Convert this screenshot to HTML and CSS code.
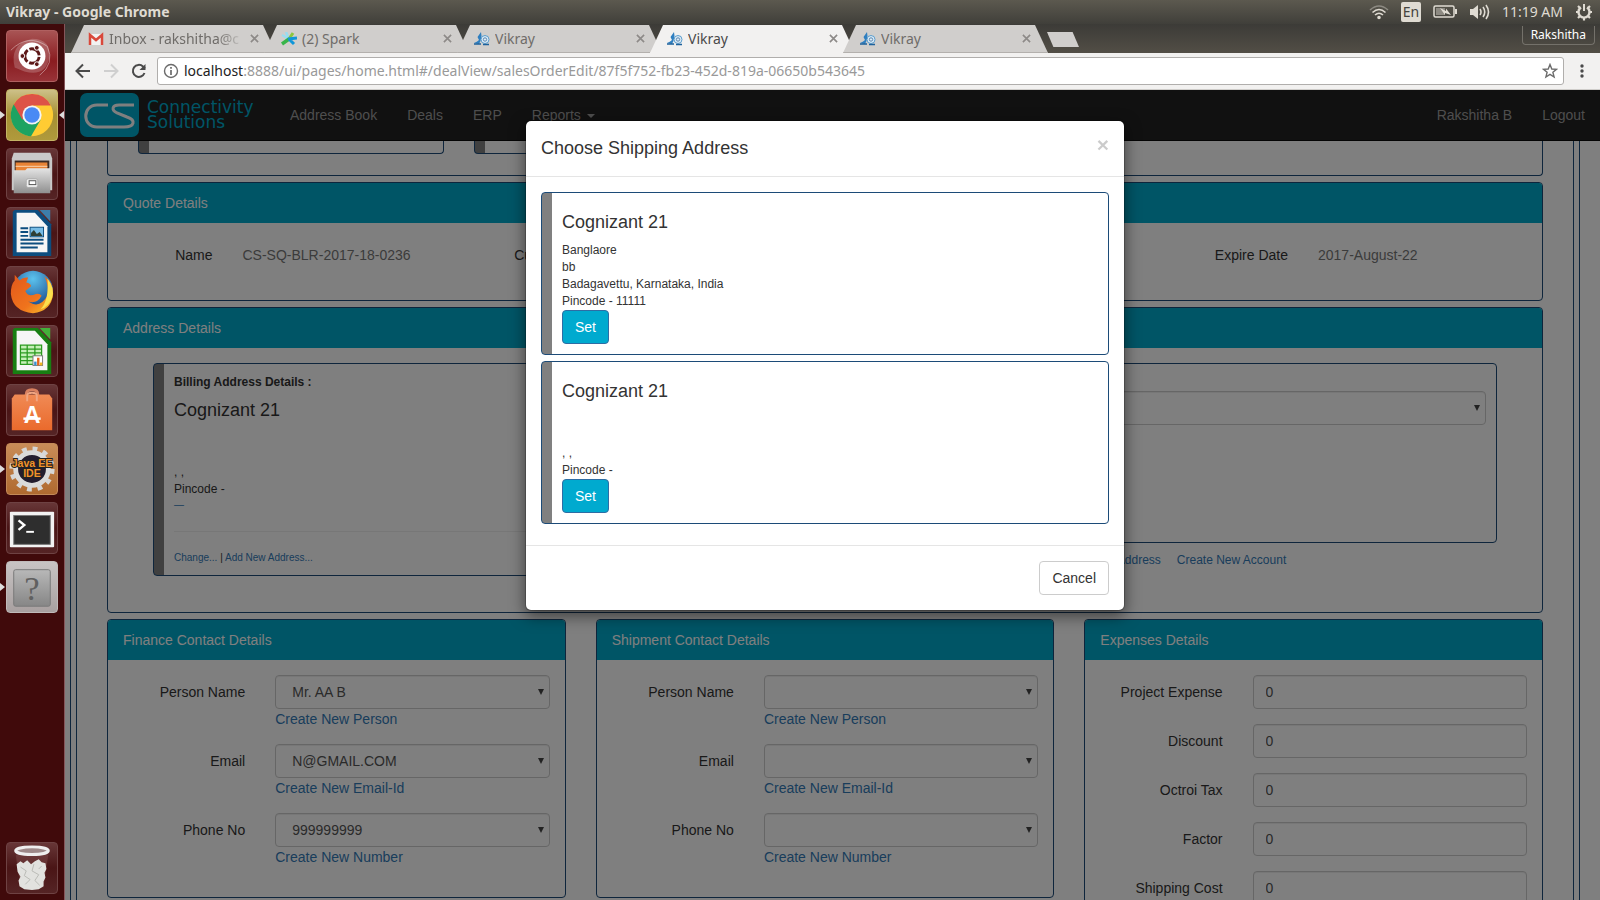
FILE: index.html
```html
<!DOCTYPE html>
<html lang="en">
<head>
  <meta charset="UTF-8">
  <meta name="viewport" content="width=device-width, initial-scale=1.0">
  <title>Vikray</title>
  <link rel="stylesheet" href="styles.css">
</head>
<body>
  <!-- Shared icons -->
  <svg class="defs" width="0" height="0" aria-hidden="true">
    <defs>
      <symbol id="vikray" viewBox="0 0 16 14">
        <path d="M0 11 Q3 10 5 8 L3.500 5 L7 0 L7.500 4 L6.500 9 L5 12 Z" fill="#2f7fc0"/>
        <circle cx="11" cy="7.500" r="4" fill="#dcebf6" stroke="#5a9ccc" stroke-width="1"/>
        <circle cx="11" cy="7.500" r="1.700" fill="none" stroke="#5a86b0"/>
        <path d="M0 12 H7 M9 12.500 H15" stroke="#1d629c" stroke-width="1.500"/>
      </symbol>
      <symbol id="cross" viewBox="0 0 10 10">
        <path d="M1 1 L9 9 M9 1 L1 9" fill="none" stroke="currentColor" stroke-width="1.800"/>
      </symbol>
      <linearGradient id="metal" x1="0" y1="0" x2="0" y2="1">
        <stop offset="0" stop-color="#e4e4e4"/><stop offset="1" stop-color="#8f8f8f"/>
      </linearGradient>
      <linearGradient id="slate" x1="0" y1="0" x2="0" y2="1">
        <stop offset="0" stop-color="#b8b8b8"/><stop offset="1" stop-color="#868686"/>
      </linearGradient>
      <linearGradient id="orange" x1="0" y1="0" x2="0" y2="1">
        <stop offset="0" stop-color="#f08a55"/><stop offset="1" stop-color="#ea6a2c"/>
      </linearGradient>
      <radialGradient id="globe" cx="0.5" cy="0.2" r="0.8">
        <stop offset="0" stop-color="#5cc3ee"/><stop offset="1" stop-color="#123a80"/>
      </radialGradient>
      <linearGradient id="fox" x1="0" y1="0" x2="1" y2="1">
        <stop offset="0" stop-color="#e2571c"/><stop offset="0.6" stop-color="#f0741c"/><stop offset="1" stop-color="#f8c92c"/>
      </linearGradient>
    </defs>
  </svg>

  <header class="panel-bar">
    <span class="window-title">Vikray - Google Chrome</span>
    <div class="tray">
      <svg width="20" height="16" viewBox="0 0 20 16" fill="none" stroke="#dfdbd2" stroke-width="1.600">
        <path d="M1 6 Q10 -2 19 6" stroke="#8d8a82"/>
        <path d="M3.500 8.500 Q10 2.500 16.500 8.500"/>
        <path d="M6 11 Q10 7.500 14 11"/>
        <circle cx="10" cy="13.500" r="1" fill="#dfdbd2"/>
      </svg>
      <span class="lang">En</span>
      <svg width="24" height="14" viewBox="0 0 24 14">
        <rect x="1" y="1" width="20" height="11" rx="1.500" fill="none" stroke="#dfdbd2" stroke-width="1.500"/>
        <rect x="22" y="4" width="2" height="5" fill="#dfdbd2"/>
        <rect x="3" y="3" width="9" height="7" fill="#8d8a82"/>
        <path d="M7 3 L13 6 L13 3.500 L18 10 L12 8 L12 10 Z" fill="#dfdbd2"/>
      </svg>
      <svg width="21" height="18" viewBox="0 0 21 18">
        <path d="M1 6 H4 L9 2 V16 L4 12 H1 Z" fill="#dfdbd2"/>
        <path d="M11 6 Q13 9 11 12 M14 4 Q17.500 9 14 14 M17 2 Q22 9 17 16" fill="none" stroke="#dfdbd2" stroke-width="1.600"/>
      </svg>
      <span class="clock">11:19 AM</span>
      <svg width="18" height="18" viewBox="0 0 18 18" fill="none" stroke="#dfdbd2">
        <path d="M6 4.500 A5.500 5.500 0 1 0 12 4.500" stroke-width="2.400"/>
        <path d="M9 1 V8" stroke-width="2"/>
        <path d="M1 9 H3 M15 9 H17 M3 3 L5 5 M15 3 L13 5 M3 15 L5 13 M15 15 L13 13 M9 15 V17.500" stroke-width="2.200"/>
      </svg>
    </div>
  </header>

  <nav class="launcher">
    <button class="tile tile-dash" aria-label="Search your computer">
      <svg viewBox="0 0 52 52">
        <path d="M8 38 Q2 14 26 8 Q46 8 44 28 Q40 48 18 42" fill="#fff" opacity="0.2"/>
        <path d="M4 20 Q22 2 42 16 Q50 34 34 46" fill="none" stroke="#fff" opacity="0.4"/>
        <circle cx="26" cy="26" r="14" fill="#fff"/>
        <circle cx="26" cy="26" r="7.500" fill="none" stroke="#5c1717" stroke-width="3" stroke-dasharray="13.700 2" stroke-dashoffset="-1"/>
        <circle cx="16" cy="26" r="2.500" fill="#5c1717" stroke="#fff"/>
        <circle cx="31" cy="17.500" r="2.500" fill="#5c1717" stroke="#fff"/>
        <circle cx="31" cy="34.500" r="2.500" fill="#5c1717" stroke="#fff"/>
      </svg>
    </button>
    <button class="tile tile-chrome running focused" aria-label="Google Chrome">
      <svg viewBox="0 0 52 52">
        <circle cx="26" cy="26" r="22" fill="#fc3"/>
        <path d="M26 26 L6.900 15 A22 22 0 0 0 25 48 L35 31 Z" fill="#1da362"/>
        <path d="M7 15 A22 22 0 0 1 45.500 16 H26 L16 31 Z" fill="#dd5347"/>
        <circle cx="26" cy="26" r="10" fill="#f4f4f4"/>
        <circle cx="26" cy="26" r="8" fill="#4a8af4"/>
      </svg>
    </button>
    <button class="tile" aria-label="Files">
      <svg viewBox="0 0 52 52">
        <path d="M7 4 H45 L47 10 V43 H5 V10 Z" fill="#c9c9c9"/>
        <rect x="8" y="12" width="36" height="12" fill="#3a2b25"/>
        <rect x="9" y="14" width="33" height="9" fill="#e88335"/>
        <path d="M9 18 H42" stroke="#fbd9b5"/>
        <path d="M7 22 H19 L21 20 H45 V46 H7 Z" fill="url(#metal)"/>
        <rect x="20" y="31" width="12" height="9" rx="2" fill="#eee" stroke="#aaa"/>
        <rect x="23" y="33" width="7" height="4" fill="#fff" stroke="#555"/>
      </svg>
    </button>
    <button class="tile" aria-label="LibreOffice Writer">
      <svg viewBox="0 0 52 52">
        <path d="M8 2 H32 L46 17 V50 H6 V4 Z" fill="#0c4d7f"/>
        <path d="M34 2 H45 V14 Z" fill="#3d7eab"/>
        <path d="M10 5 H29 L42 19 V46 H10 Z" fill="#f6f6f6"/>
        <path d="M14 21 H22 M14 25 H22 M14 29 H22 M14 33 H38 M14 37 H38 M14 41 H32" stroke="#0c4d7f" stroke-width="2"/>
        <rect x="24" y="20" width="14" height="10" fill="#78bce5" stroke="#0c4d7f"/>
        <path d="M25 29 V26 L28 23 L31 27 L34 25 L37 29 Z" fill="#2f3f35"/>
      </svg>
    </button>
    <button class="tile" aria-label="Firefox">
      <svg viewBox="0 0 52 52">
        <circle cx="27" cy="25" r="21" fill="url(#globe)"/>
        <path d="M8 8 L13 14 Q17 10 22 11 L20 16 Q25 17 25 20 L19 25 Q22 32 30 28 Q34 27 36 30 Q31 39 22 36 Q34 44 42 30 Q44 20 39 10 Q48 16 48 28 Q46 46 27 48 Q6 46 4 28 Q4 18 8 14 Z" fill="url(#fox)"/>
        <path d="M42 12 Q50 22 47 32 Q43 42 35 44 Q44 34 42 12" fill="#fbe04e"/>
      </svg>
    </button>
    <button class="tile" aria-label="LibreOffice Calc">
      <svg viewBox="0 0 52 52">
        <path d="M8 2 H32 L46 17 V50 H6 V4 Z" fill="#187f12"/>
        <path d="M34 2 H45 V14 Z" fill="#43b03a"/>
        <path d="M10 5 H29 L42 19 V46 H10 Z" fill="#f6f6f6"/>
        <rect x="14" y="20" width="22" height="20" fill="#c6f0b8"/>
        <path d="M14 20 H36 V40 H14 Z M14 24 H36 M14 28 H36 M14 32 H36 M14 36 H36 M21 20 V40 M29 20 V40" fill="none" stroke="#2a9a1e" stroke-width="1.300"/>
        <rect x="27" y="31" width="10" height="10" fill="#fff" stroke="#777"/>
        <path d="M29.500 41 V37" stroke="#3b8fd0" stroke-width="2.500"/>
        <path d="M32.500 41 V33" stroke="#e3651d" stroke-width="2.500"/>
        <path d="M35.500 41 V38" stroke="#f0b61e" stroke-width="2.500"/>
      </svg>
    </button>
    <button class="tile" aria-label="Ubuntu Software">
      <svg viewBox="0 0 52 52">
        <path d="M20 18 V10 Q20 5 26 5 Q32 5 32 10 V18" fill="none" stroke="#d98160" stroke-width="3"/>
        <path d="M5 14 L8 10 H44 L47 14 V47 H5 Z" fill="url(#orange)"/>
        <path d="M21 17 V11 Q21 8 26 8 Q31 8 31 11 V17" fill="none" stroke="#f0a582" stroke-width="2"/>
        <text x="26" y="39" text-anchor="middle" class="bag-letter">A</text>
        <path d="M17 35 H35" stroke="#fff" stroke-width="2.500"/>
      </svg>
    </button>
    <button class="tile tile-java running" aria-label="Java EE IDE">
      <svg viewBox="0 0 52 52">
        <circle cx="26" cy="26" r="21" fill="none" stroke="#d6d6d6" stroke-width="5" stroke-dasharray="5 5.990"/>
        <circle cx="26" cy="26" r="17" fill="#231d2e" stroke="#dadada" stroke-width="5"/>
        <text x="26" y="24" text-anchor="middle" class="java-text">Java EE</text>
        <text x="26" y="34" text-anchor="middle" class="java-text">IDE</text>
      </svg>
    </button>
    <button class="tile" aria-label="Terminal">
      <svg viewBox="0 0 52 52">
        <rect x="3" y="9" width="46" height="37" rx="1" fill="#f2f2f2"/>
        <rect x="7" y="13" width="38" height="30" fill="#2e2e2e" stroke="#777"/>
        <path d="M12 18 L18 23 L12 28" fill="none" stroke="#fff" stroke-width="2.500"/>
        <path d="M20 30 H28" stroke="#fff" stroke-width="2"/>
      </svg>
    </button>
    <button class="tile tile-unknown running" aria-label="Unknown application">
      <svg viewBox="0 0 52 52">
        <rect x="7" y="8" width="38" height="38" rx="2" fill="url(#slate)" stroke="#787878"/>
        <text x="26" y="39" text-anchor="middle" class="question">?</text>
      </svg>
    </button>
    <button class="tile tile-trash" aria-label="Trash">
      <svg viewBox="0 0 52 52">
        <path d="M9 12 L14 46 Q26 50 38 46 L43 12 Z" fill="#7c4a4a" opacity="0.5"/>
        <path d="M10 22 L14 19 L17 21 L21 18 L25 22 L29 19 L33 17 L36 20 L40 21 L41 27 L39 31 L40 36 L38 40 L38 45 L33 48 L26 49 L18 48 L13 45 L12 39 L14 35 L11 30 Z" fill="#e2e2df"/>
        <path d="M14 25 L20 29 L18 34 L24 38 L19 43 M28 22 L26 29 L33 33 L29 39 L34 44 M36 24 L33 27" fill="none" stroke="#b9bab5"/>
        <ellipse cx="26" cy="8" rx="17" ry="4" fill="#9d8888" stroke="#eee" stroke-width="3"/>
      </svg>
    </button>
  </nav>

  <div class="browser">
    <div class="tab-strip">
      <div class="tab">
        <svg class="favicon" viewBox="0 0 16 14">
          <rect x="1" y="2" width="14" height="11" fill="#f2f2f2"/>
          <path d="M2 13 V3 L8 8 L14 3 V13" fill="none" stroke="#d9483b" stroke-width="2.500"/>
        </svg>
        <span class="tab-title faded">Inbox - rakshitha@c</span>
        <svg class="tab-close"><use href="#cross"/></svg>
      </div>
      <div class="tab">
        <svg class="favicon" viewBox="0 0 16 14" fill="none">
          <path d="M5 0 L8 7 M1 3 L8 7" stroke="#9adcf0" stroke-width="2.500"/>
          <path d="M12 1 L8 7" stroke="#8cc63f" stroke-width="3"/>
          <path d="M1 12 L8 7" stroke="#38b54a" stroke-width="3.500"/>
          <path d="M7 7 L16 6 M8 7 L13 12" stroke="#1096d8" stroke-width="3"/>
        </svg>
        <span class="tab-title">(2) Spark</span>
        <svg class="tab-close"><use href="#cross"/></svg>
      </div>
      <div class="tab">
        <svg class="favicon"><use href="#vikray"/></svg>
        <span class="tab-title">Vikray</span>
        <svg class="tab-close"><use href="#cross"/></svg>
      </div>
      <div class="tab active">
        <svg class="favicon"><use href="#vikray"/></svg>
        <span class="tab-title">Vikray</span>
        <svg class="tab-close"><use href="#cross"/></svg>
      </div>
      <div class="tab">
        <svg class="favicon"><use href="#vikray"/></svg>
        <span class="tab-title">Vikray</span>
        <svg class="tab-close"><use href="#cross"/></svg>
      </div>
      <button class="new-tab" aria-label="New tab"></button>
      <span class="profile">Rakshitha</span>
    </div>

    <div class="toolbar">
      <svg width="16" height="16" viewBox="0 0 16 16" fill="none" stroke="#4a4a4a" stroke-width="2"><path d="M15 8 H2 M8 1.500 L1.500 8 L8 14.500"/></svg>
      <svg width="16" height="16" viewBox="0 0 16 16" fill="none" stroke="#cfcfcf" stroke-width="2"><path d="M1 8 H14 M8 1.500 L14.500 8 L8 14.500"/></svg>
      <svg width="16" height="16" viewBox="0 0 16 16" fill="none" stroke="#4a4a4a" stroke-width="2"><path d="M13.500 10 A6 6 0 1 1 12 3.500 L14 5.500"/><path d="M14.500 1 V7 H8.500 Z" fill="#4a4a4a" stroke="none"/></svg>
      <div class="url-box">
        <svg width="16" height="16" viewBox="0 0 16 16" fill="none" stroke="#6b6b6b"><circle cx="8" cy="8" r="6.500" stroke-width="1.400"/><path d="M8 7 V12 M8 4 V5.700" stroke-width="1.700"/></svg>
        <span class="url"><b>localhost</b>:8888/ui/pages/home.html#/dealView/salesOrderEdit/87f5f752-fb23-452d-819a-06650b543645</span>
        <svg width="16" height="16" viewBox="0 0 16 16" fill="none" stroke="#6b6b6b" stroke-width="1.400"><path d="M8 1.500 L9.800 6 L14.500 6.300 L10.900 9.300 L12.100 14 L8 11.400 L3.900 14 L5.100 9.300 L1.500 6.300 L6.200 6 Z"/></svg>
      </div>
      <svg width="4" height="16" viewBox="0 0 4 16" fill="#4a4a4a"><circle cx="2" cy="3" r="1.700"/><circle cx="2" cy="8" r="1.700"/><circle cx="2" cy="13" r="1.700"/></svg>
    </div>

    <div class="page">
      <nav class="navbar">
        <a class="brand" href="#">
          <svg width="59" height="44" viewBox="0 0 59 44">
            <rect width="59" height="44" rx="7" fill="#00aacc"/>
            <path d="M28 12 H17 C2 12 2 34 17 34 H44 C55 34 56 27 47 24 L37 20 C31 17 32 12 39 12 H54" fill="none" stroke="#fff" stroke-width="3"/>
          </svg>
          <span class="brand-text">Connectivity<br>Solutions</span>
        </a>
        <a class="nav-link" href="#">Address Book</a>
        <a class="nav-link" href="#">Deals</a>
        <a class="nav-link" href="#">ERP</a>
        <a class="nav-link" href="#">Reports <span class="caret"></span></a>
        <a class="nav-link first-right" href="#">Rakshitha B</a>
        <a class="nav-link" href="#">Logout</a>
      </nav>

      <div class="frame">
        <main class="frame-inner">
          <section class="panel panel-top">
            <div class="card-stub"></div>
            <div class="card-stub"></div>
            <div class="card-stub"></div>
          </section>

          <section class="panel">
            <h3 class="panel-heading">Quote Details</h3>
            <div class="quote-row">
              <div class="field"><span class="label">Name</span><span class="value">CS-SQ-BLR-2017-18-0236</span></div>
              <div class="field"><span class="label">Currency</span><span class="value"></span></div>
              <div class="field"></div>
              <div class="field"><span class="label">Expire Date</span><span class="value">2017-August-22</span></div>
            </div>
          </section>

          <section class="panel">
            <h3 class="panel-heading">Address Details</h3>
            <div class="address-row">
              <div class="address-card">
                <strong>Billing Address Details :</strong>
                <h4>Cognizant 21</h4>
                <p><br><br>, ,<br>Pincode -</p>
                <div class="small"><a href="#">—</a></div>
                <hr>
                <div class="small"><a href="#">Change...</a> | <a href="#">Add New Address...</a></div>
              </div>
              <div>
                <div class="address-card shipping">
                  <label for="ship-account"><strong>Shipping Address Details :</strong></label>
                  <div class="select"><select id="ship-account"><option></option></select></div>
                </div>
                <div class="address-links">
                  <a href="#">Create New Address</a>
                  <a href="#">Create New Account</a>
                </div>
              </div>
            </div>
          </section>

          <div class="columns">
            <section class="panel">
              <h3 class="panel-heading">Finance Contact Details</h3>
              <div class="panel-body">
                <div class="field">
                  <label class="label" for="fin-person">Person Name</label>
                  <div class="control">
                    <div class="select"><select id="fin-person"><option>Mr. AA B</option></select></div>
                    <a href="#">Create New Person</a>
                  </div>
                </div>
                <div class="field">
                  <label class="label" for="fin-email">Email</label>
                  <div class="control">
                    <div class="select"><select id="fin-email"><option>N@GMAIL.COM</option></select></div>
                    <a href="#">Create New Email-Id</a>
                  </div>
                </div>
                <div class="field">
                  <label class="label" for="fin-phone">Phone No</label>
                  <div class="control">
                    <div class="select"><select id="fin-phone"><option>999999999</option></select></div>
                    <a href="#">Create New Number</a>
                  </div>
                </div>
              </div>
            </section>

            <section class="panel">
              <h3 class="panel-heading">Shipment Contact Details</h3>
              <div class="panel-body">
                <div class="field">
                  <label class="label" for="shp-person">Person Name</label>
                  <div class="control">
                    <div class="select"><select id="shp-person"><option></option></select></div>
                    <a href="#">Create New Person</a>
                  </div>
                </div>
                <div class="field">
                  <label class="label" for="shp-email">Email</label>
                  <div class="control">
                    <div class="select"><select id="shp-email"><option></option></select></div>
                    <a href="#">Create New Email-Id</a>
                  </div>
                </div>
                <div class="field">
                  <label class="label" for="shp-phone">Phone No</label>
                  <div class="control">
                    <div class="select"><select id="shp-phone"><option></option></select></div>
                    <a href="#">Create New Number</a>
                  </div>
                </div>
              </div>
            </section>

            <section class="panel">
              <h3 class="panel-heading">Expenses Details</h3>
              <div class="panel-body">
                <div class="field"><label class="label" for="expense">Project Expense</label><div class="control"><input id="expense" type="text" value="0"></div></div>
                <div class="field"><label class="label" for="discount">Discount</label><div class="control"><input id="discount" type="text" value="0"></div></div>
                <div class="field"><label class="label" for="octroi">Octroi Tax</label><div class="control"><input id="octroi" type="text" value="0"></div></div>
                <div class="field"><label class="label" for="factor">Factor</label><div class="control"><input id="factor" type="text" value="0"></div></div>
                <div class="field"><label class="label" for="shipcost">Shipping Cost</label><div class="control"><input id="shipcost" type="text" value="0"></div></div>
              </div>
            </section>
          </div>
        </main>
      </div>

      <div class="backdrop">
        <div class="modal" role="dialog" aria-labelledby="modal-title">
          <div class="modal-header">
            <h4 id="modal-title">Choose Shipping Address</h4>
            <button class="close" aria-label="Close">×</button>
          </div>
          <div class="modal-body">
            <div class="address-card">
              <h4>Cognizant 21</h4>
              <p>Banglaore<br>bb<br>Badagavettu, Karnataka, India<br>Pincode - 11111</p>
              <button class="btn btn-primary">Set</button>
            </div>
            <div class="address-card">
              <h4>Cognizant 21</h4>
              <p><br><br>, ,<br>Pincode -</p>
              <button class="btn btn-primary">Set</button>
            </div>
          </div>
          <div class="modal-footer">
            <button class="btn">Cancel</button>
          </div>
        </div>
      </div>
    </div>
  </div>
</body>
</html>
```

FILE: styles.css
```css
* {
  box-sizing: border-box;
}

body {
  margin: 0;
  height: 100vh;
  overflow: hidden;
  display: grid;
  grid-template-rows: 24px minmax(0, 1fr);
  grid-template-columns: 65px minmax(0, 1fr);
  font-family: "Liberation Sans", Arial, sans-serif;
  font-size: 14px;
  line-height: 20px;
  color: #333;
}

button {
  font-family: inherit;
  cursor: pointer;
}

a {
  color: #337ab7;
  text-decoration: none;
}

.defs {
  position: absolute;
}

/* Desktop panel */
.panel-bar {
  grid-column: 1 / 3;
  display: flex;
  justify-content: space-between;
  align-items: center;
  padding: 0 7px 0 6px;
  background: linear-gradient(#5c594f, #403f3a);
  color: #dfdbd2;
  font-family: "Noto Sans", sans-serif;
}

.window-title {
  font-weight: bold;
}

.tray {
  display: flex;
  align-items: center;
  gap: 12px;
}

.lang {
  width: 20px;
  line-height: 20px;
  border-radius: 2px;
  background: #dfdbd2;
  color: #45433e;
  text-align: center;
}

/* Launcher */
.launcher {
  display: flex;
  flex-direction: column;
  gap: 7px;
  padding: 6px;
  background: #400a0b;
  border-right: 1px solid #85555a;
}

.tile {
  position: relative;
  flex: none;
  width: 52px;
  height: 52px;
  padding: 0;
  border: 1px solid #6e4243;
  border-radius: 4px;
  background: linear-gradient(#673637, #4a1516 50%, #552425);
}

.tile svg {
  display: block;
  width: 50px;
  height: 50px;
}

.tile-dash {
  background: linear-gradient(#a85454, #8a1c20 60%, #983338);
  border-color: #b06060;
}

.tile-chrome {
  background: linear-gradient(#cdc088, #a58f33 50%, #b09a3c);
  border-color: #c4b465;
}

.tile-java {
  background: linear-gradient(#c98c58, #b06a30);
  border-color: #c48a58;
}

.tile-unknown {
  background: linear-gradient(#c8c4c4, #a8a0a0);
  border-color: #c0baba;
}

.tile-trash {
  margin-top: auto;
}

.running::before,
.focused::after {
  content: "";
  position: absolute;
  top: 21px;
  left: -7px;
  border: 4px solid transparent;
  border-left: 5px solid #ddd;
  border-right: 0;
}

.focused::after {
  left: auto;
  right: -7px;
  border-left: 0;
  border-right: 5px solid #ddd;
}

.bag-letter {
  font: bold 24px "Liberation Sans", sans-serif;
  fill: #fff;
}

.java-text {
  font: bold 11px "Liberation Sans", sans-serif;
  fill: #f0922a;
  stroke: #222;
  stroke-width: 2px;
  paint-order: stroke;
}

.question {
  font: 36px "Liberation Serif", serif;
  fill: #606060;
}

/* Browser chrome */
.browser {
  display: flex;
  flex-direction: column;
  min-height: 0;
}

.tab-strip {
  flex: none;
  display: flex;
  height: 29px;
  padding: 1px 5px 0 6px;
  background: linear-gradient(#3c3b37, #524e46);
  font-family: "Noto Sans", sans-serif;
}

.tab {
  display: flex;
  align-items: center;
  flex: 0 1 205px;
  min-width: 0;
  margin-right: -12px;
  padding: 0 17px;
  background: #d0cecc;
  border-bottom: 1px solid #b3b0ad;
  clip-path: polygon(13px 0, calc(100% - 13px) 0, 100% 100%, 0 100%);
  color: #6f6c69;
}

.tab.active {
  position: relative;
  background: #f2f1f0;
  border-color: #f2f1f0;
  color: #4a4a4a;
}

.favicon {
  flex: none;
  width: 16px;
  height: 14px;
  margin-right: 5px;
}

.tab-title {
  flex: 1;
  overflow: hidden;
  white-space: nowrap;
}

.faded {
  -webkit-mask-image: linear-gradient(to right, #000 80%, transparent);
  mask-image: linear-gradient(to right, #000 80%, transparent);
}

.tab-close {
  flex: none;
  width: 9px;
  height: 9px;
  margin-left: 6px;
  color: #8d8a88;
}

.new-tab {
  width: 32px;
  height: 15px;
  margin: 7px 0 0 11px;
  padding: 0;
  border: 0;
  background: #d0cecc;
  clip-path: polygon(0 0, 80% 0, 100% 100%, 20% 100%);
}

.profile {
  align-self: flex-start;
  margin: 1px 0 0 auto;
  padding: 0 8px;
  border: 1px solid #74716a;
  border-top: 0;
  border-radius: 0 0 4px 4px;
  color: #fff;
  font-size: 12px;
  line-height: 18px;
}

.toolbar {
  flex: none;
  display: flex;
  align-items: center;
  gap: 12px;
  height: 37px;
  padding: 0 16px 0 10px;
  background: #f2f1f0;
  border-bottom: 1px solid #cfcdca;
}

.url-box {
  flex: 1;
  display: flex;
  align-items: center;
  gap: 5px;
  height: 28px;
  margin-right: 4px;
  margin-left: -2px;
  padding: 0 5px;
  border: 1px solid #b0aeac;
  border-radius: 3px;
  background: #fff;
}

.url {
  flex: 1;
  font-family: "Noto Sans", sans-serif;
  font-size: 14px;
  color: #999;
}

.url b {
  font-weight: normal;
  color: #222;
}

/* Page */
.page {
  position: relative;
  flex: 1;
  min-height: 0;
  overflow: hidden;
  background: #fff;
}

.navbar {
  display: flex;
  align-items: center;
  height: 51px;
  background: #222;
  border-bottom: 1px solid #080808;
}

.brand {
  display: flex;
  align-items: center;
  gap: 8px;
  width: 210px;
  padding-left: 15px;
}

.brand-text {
  color: #00aacc;
  font-family: "DejaVu Sans", sans-serif;
  font-size: 17px;
  line-height: 15px;
}

.nav-link {
  padding: 15px;
  color: #9d9d9d;
}

.first-right {
  margin-left: auto;
}

.caret {
  display: inline-block;
  margin-left: 2px;
  vertical-align: middle;
  border-top: 4px solid;
  border-left: 4px solid transparent;
  border-right: 4px solid transparent;
}

.frame {
  margin: 0 20px 0 5px;
  padding: 0 5px;
  border: solid #1c4b78;
  border-width: 0 1px;
}

.frame-inner {
  padding: 0 30px;
  border: solid #1c4b78;
  border-width: 0 1px;
}

.panel {
  margin-bottom: 6px;
  border: 1px solid #1c4b78;
  border-radius: 4px;
  overflow: hidden;
}

.panel-top {
  display: grid;
  grid-template-columns: repeat(4, 1fr);
  gap: 30px;
  padding: 0 90px 21px 30px;
  border-top: 0;
  border-radius: 0 0 4px 4px;
}

.card-stub {
  height: 13px;
  border: 1px solid #1c4b78;
  border-top: 0;
  border-radius: 0 0 4px 4px;
  background: linear-gradient(to right, #808080 10px, #fff 10px);
}

.panel-heading {
  margin: 0;
  padding: 10px 15px;
  background: #00aacc;
  color: #fff;
  font-size: 14px;
  font-weight: normal;
  line-height: 20px;
}

.panel-body {
  padding: 15px 0;
}

.quote-row {
  display: grid;
  grid-template-columns: repeat(4, 1fr);
  padding: 15px 0 28px;
}

.field {
  display: grid;
  grid-template-columns: 1fr 2fr;
}

.panel-body .field {
  margin-bottom: 15px;
}

.label {
  padding: 7px 15px;
  text-align: right;
}

.value {
  padding: 7px 15px;
  color: #777;
}

.control {
  padding: 0 15px;
}

.control > a {
  display: block;
}

input,
select {
  display: block;
  width: 100%;
  height: 34px;
  padding: 6px 12px;
  border: 1px solid #ccc;
  border-radius: 4px;
  background: #fff;
  box-shadow: inset 0 1px 1px rgba(0, 0, 0, 0.075);
  color: #555;
  font: inherit;
}

select {
  appearance: none;
  padding: 6px 16px;
}

.select {
  position: relative;
}

.select::after {
  content: "";
  position: absolute;
  top: 14px;
  right: 6px;
  border: 3px solid transparent;
  border-top: 6px solid #444;
  border-bottom: 0;
}

.columns {
  display: grid;
  grid-template-columns: repeat(3, 1fr);
  align-items: start;
  gap: 30px;
}

/* Address cards */
.address-row {
  display: grid;
  grid-template-columns: 1fr 1fr;
  align-items: start;
  gap: 30px;
  padding: 15px 45px 36px;
}

.address-card {
  padding: 10px 10px 10px 20px;
  border: 1px solid #1c4b78;
  border-radius: 4px;
  background: linear-gradient(to right, #808080 10px, #fff 10px);
  font-size: 12px;
  line-height: 17px;
}

.address-card strong {
  display: block;
}

.address-card h4 {
  margin: 10px 0;
  font-size: 18px;
  font-weight: normal;
  line-height: 19px;
}

.address-card p {
  margin: 0;
}

.address-card hr {
  margin: 19px 0;
  border: 0;
  border-top: 1px solid #eee;
}

.shipping {
  min-height: 180px;
}

.small {
  font-size: 10px;
  line-height: 14px;
}

.address-links {
  display: flex;
  justify-content: center;
  gap: 16px;
  margin-top: 9px;
  font-size: 12px;
  line-height: 17px;
}

/* Modal */
.backdrop {
  position: absolute;
  inset: 0;
  padding: 30px 15px 0 0;
  background: rgba(0, 0, 0, 0.5);
}

.modal {
  max-width: 600px;
  margin: 0 auto;
  border: 1px solid rgba(0, 0, 0, 0.2);
  border-radius: 6px;
  background: #fff;
  background-clip: padding-box;
  box-shadow: 0 5px 15px rgba(0, 0, 0, 0.5);
}

.modal-header {
  display: flex;
  justify-content: space-between;
  align-items: flex-start;
  padding: 15px;
  border-bottom: 1px solid #e5e5e5;
}

.modal-header h4 {
  margin: 0;
  font-size: 18px;
  font-weight: normal;
  line-height: 25px;
}

.close {
  padding: 0;
  border: 0;
  background: none;
  color: #000;
  font-size: 21px;
  font-weight: bold;
  line-height: 18px;
  opacity: 0.2;
}

.modal-body {
  padding: 15px;
}

.modal-body .address-card {
  margin-bottom: 6px;
}

.modal-footer {
  padding: 15px;
  border-top: 1px solid #e5e5e5;
  text-align: right;
}

.btn {
  display: inline-block;
  padding: 6px 12px;
  border: 1px solid #ccc;
  border-radius: 4px;
  background: #fff;
  color: #333;
  font-size: 14px;
  line-height: 20px;
  vertical-align: top;
}

.btn-primary {
  border-color: #2e6da4;
  background: #00aacf;
  color: #fff;
}
```
